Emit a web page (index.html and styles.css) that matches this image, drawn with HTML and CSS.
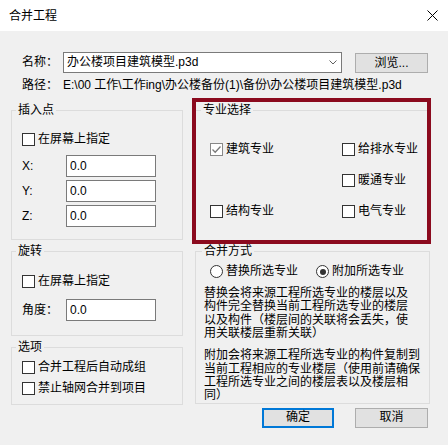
FILE: index.html
```html
<!DOCTYPE html>
<html>
  <head>
    <meta charset="UTF-8" />
    <title>合并工程</title>
    <link rel="stylesheet" href="styles.css">
  </head>
  <body>
    <div class="dialog">
      <div class="titlebar">
        <span class="title">合并工程</span>
        <svg class="close" viewBox="0 0 11 11" aria-label="关闭">
          <path d="M0.5 0.5 L10.5 10.5 M10.5 0.5 L0.5 10.5" />
        </svg>
      </div>

      <div class="file-row">
        <span class="label">名称：</span>
        <div class="combo">
          <span class="combo-text">办公楼项目建筑模型.p3d</span>
          <span class="combo-arrow">
            <svg viewBox="0 0 8 5"><path d="M0.5 0.5 L4 4 L7.5 0.5" /></svg>
          </span>
        </div>
        <button class="btn btn-browse">浏览...</button>
      </div>

      <div class="path-row">
        <span class="label">路径：</span>
        <span class="path">E:\00 工作\工作ing\办公楼备份(1)\备份\办公楼项目建筑模型.p3d</span>
      </div>

      <div class="columns">
        <div class="col-left">
          <fieldset class="group group-insert">
            <legend>插入点</legend>
            <label class="check"><span class="box"></span>在屏幕上指定</label>
            <div class="field field-x">
              <span class="field-label">X:</span>
              <input class="text-input" type="text" value="0.0">
            </div>
            <div class="field">
              <span class="field-label">Y:</span>
              <input class="text-input" type="text" value="0.0">
            </div>
            <div class="field">
              <span class="field-label">Z:</span>
              <input class="text-input" type="text" value="0.0">
            </div>
          </fieldset>

          <fieldset class="group group-rotate">
            <legend>旋转</legend>
            <label class="check"><span class="box"></span>在屏幕上指定</label>
            <div class="field field-angle">
              <span class="field-label">角度：</span>
              <input class="text-input" type="text" value="0.0">
            </div>
          </fieldset>

          <fieldset class="group group-options">
            <legend>选项</legend>
            <label class="check"><span class="box"></span>合并工程后自动成组</label>
            <label class="check check-next"><span class="box"></span>禁止轴网合并到项目</label>
          </fieldset>
        </div>

        <div class="col-right">
          <fieldset class="group group-spec">
            <legend>专业选择</legend>
            <div class="spec-grid">
              <label class="check">
                <span class="box box-checked">
                  <svg viewBox="0 0 11 11"><path d="M1.5 5.5 L4.2 8.2 L9.5 2.5" /></svg>
                </span>建筑专业
              </label>
              <label class="check"><span class="box"></span>给排水专业</label>
              <label class="check spec-second"><span class="box"></span>暖通专业</label>
              <label class="check"><span class="box"></span>结构专业</label>
              <label class="check"><span class="box"></span>电气专业</label>
            </div>
          </fieldset>

          <fieldset class="group group-merge">
            <legend>合并方式</legend>
            <div class="radio-row">
              <label class="radio"><span class="dot"></span>替换所选专业</label>
              <label class="radio radio-on"><span class="dot"></span>附加所选专业</label>
            </div>
            <p class="note note-replace">替换会将来源工程所选专业的楼层以及构件完全替换当前工程所选专业的楼层以及构件（楼层间的关联将会丢失，使用关联楼层重新关联）</p>
            <p class="note note-append">附加会将来源工程所选专业的构件复制到当前工程相应的专业楼层（使用前请确保工程所选专业之间的楼层表以及楼层相同）</p>
          </fieldset>

          <div class="actions">
            <button class="btn btn-default">确定</button>
            <button class="btn btn-cancel">取消</button>
          </div>
        </div>
      </div>

      <div class="highlight"></div>
    </div>
  </body>
</html>
```

FILE: styles.css
```css
* {
  box-sizing: border-box;
}

body {
  margin: 0;
  width: 448px;
  height: 445px;
  overflow: hidden;
  background-color: #f0f0f0;
  font-family: "Liberation Sans", "Noto Sans CJK SC", sans-serif;
  font-size: 12px;
  line-height: 13px;
  color: #000;
}

.dialog {
  position: relative;
  height: 445px;
}

/* Title bar */
.titlebar {
  display: flex;
  align-items: center;
  justify-content: space-between;
  height: 31px;
  padding: 1px 10px 0 9px;
  background-color: #fff;
}

.close {
  width: 11px;
  height: 11px;
  margin-top: -1px;
}

.close path {
  fill: none;
  stroke: #000;
  stroke-width: 1;
}

/* File name / path */
.file-row {
  display: flex;
  align-items: flex-start;
  margin: 21px 0 0 22px;
  height: 21px;
}

.label {
  width: 41px;
  flex: none;
}

.file-row .label {
  line-height: 21px;
}

.combo {
  display: flex;
  align-items: center;
  width: 279px;
  height: 21px;
  border: 1px solid #7a7a7a;
  background-color: #fff;
}

.combo-text {
  flex: 1;
  padding-left: 3px;
}

.combo-arrow {
  display: flex;
  align-items: center;
  justify-content: center;
  width: 17px;
  height: 19px;
}

.combo-arrow svg {
  width: 8px;
  height: 5px;
}

.combo-arrow path {
  fill: none;
  stroke: #606060;
  stroke-width: 1;
}

.path-row {
  display: flex;
  margin: 6px 0 0 22px;
}

/* Buttons */
.btn {
  font: inherit;
  line-height: 13px;
  color: #000;
  background-color: #e1e1e1;
  border: 1px solid #adadad;
  padding: 0;
  height: 20px;
}

.btn-browse {
  width: 73px;
  margin: 1px 0 0 13px;
}

.btn-default {
  width: 72px;
  border: 2px solid #0078d7;
}

.btn-cancel {
  width: 73px;
}

/* Columns */
.columns {
  display: flex;
  gap: 12px;
  margin-top: 12px;
  padding-left: 11px;
}

.col-left {
  width: 172px;
}

.col-right {
  width: 235px;
}

/* Group boxes */
.group {
  margin: 0;
  min-width: 0;
  padding: 0 10px;
  border: 1px solid #dcdcdc;
}

.group legend {
  padding: 0 2px;
  margin-left: -6px;
  line-height: 13px;
}

.group-insert {
  padding-top: 16px;
  padding-bottom: 12px;
}

.group-rotate {
  margin-top: 5px;
  padding-top: 17px;
  padding-bottom: 14px;
}

.group-options {
  margin-top: 5px;
  padding-top: 7px;
  padding-bottom: 9px;
}

.group-spec {
  padding: 26px 10px 22px 14px;
}

.group-spec legend {
  margin-left: -9px;
}

.group-merge {
  margin-top: 4px;
  padding: 7px 6px 0 8px;
}

.group-merge legend {
  margin-left: -2px;
}

/* Checkboxes */
.check {
  display: flex;
  align-items: center;
  gap: 3px;
  height: 13px;
  white-space: nowrap;
}

.check-next {
  margin-top: 8px;
}

.box {
  display: flex;
  width: 13px;
  height: 13px;
  flex: none;
  border: 1px solid #333;
  background-color: #fff;
}

.box-checked {
  border-color: #888;
}

.box-checked svg {
  width: 11px;
  height: 11px;
}

.box-checked path {
  fill: none;
  stroke: #7a7a7a;
  stroke-width: 1.3;
}

/* Text fields */
.field {
  display: flex;
  align-items: center;
  margin-top: 3px;
}

.field-x,
.field-angle {
  margin-top: 9px;
}

.field-angle {
  margin-top: 11px;
}

.field-label {
  width: 44px;
  flex: none;
}

.text-input {
  width: 90px;
  height: 22px;
  padding: 0 0 0 3px;
  border: 1px solid #7a7a7a;
  background-color: #fff;
  font: inherit;
  color: #000;
  outline: none;
}

/* Discipline grid */
.spec-grid {
  display: grid;
  grid-template-columns: 132px auto;
  row-gap: 18px;
}

.spec-second {
  grid-column: 2;
}

/* Radios */
.radio-row {
  display: flex;
  gap: 18px;
  margin-left: 6px;
}

.radio {
  display: flex;
  align-items: center;
  gap: 3px;
  height: 13px;
}

.dot {
  display: flex;
  align-items: center;
  justify-content: center;
  width: 13px;
  height: 13px;
  border: 1px solid #333;
  border-radius: 50%;
  background-color: #fff;
}

.radio-on .dot::after {
  content: '';
  width: 6px;
  height: 6px;
  border-radius: 50%;
  background-color: #333;
}

.note {
  margin: 9px 0 0;
  line-height: 13.33px;
}

.note-replace {
  width: 208px;
}

.note-append {
  width: 220px;
}

.actions {
  display: flex;
  justify-content: flex-end;
  gap: 21px;
  margin-top: 4px;
  padding-right: 2px;
}

/* Review annotation drawn over the discipline group */
.highlight {
  position: absolute;
  left: 192px;
  top: 98px;
  width: 239px;
  height: 146px;
  border: 4px solid #8b0a1e;
}
```
